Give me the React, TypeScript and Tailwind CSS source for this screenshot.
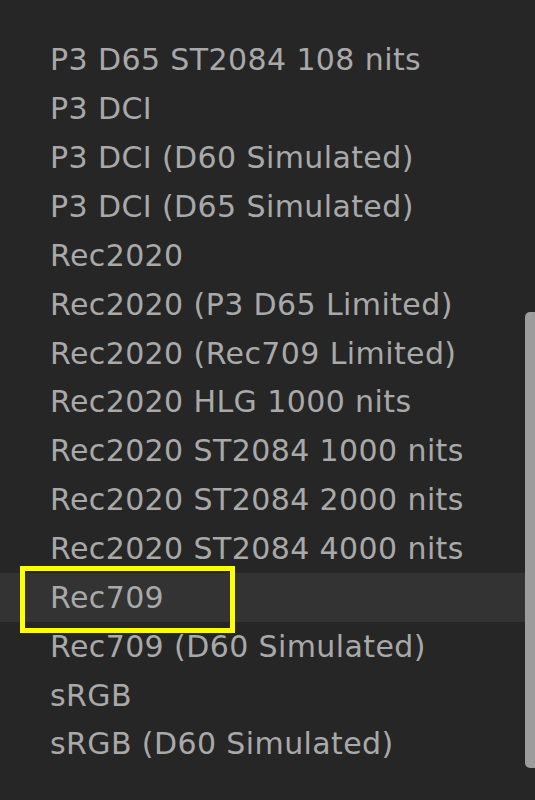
import React from 'react';

const items = [
  'P3 D65 ST2084 108 nits',
  'P3 DCI',
  'P3 DCI (D60 Simulated)',
  'P3 DCI (D65 Simulated)',
  'Rec2020',
  'Rec2020 (P3 D65 Limited)',
  'Rec2020 (Rec709 Limited)',
  'Rec2020 HLG 1000 nits',
  'Rec2020 ST2084 1000 nits',
  'Rec2020 ST2084 2000 nits',
  'Rec2020 ST2084 4000 nits',
  'Rec709',
  'Rec709 (D60 Simulated)',
  'sRGB',
  'sRGB (D60 Simulated)',
];

const App: React.FC = () => {
  return (
    <div
      className="relative h-[800px] w-[535px] overflow-hidden bg-[#262626]"
      style={{ fontFamily: '"DejaVu Sans", "Noto Sans", sans-serif' }}
    >
      <ul className="pt-[36px] pr-[10px]">
        {items.map((item) => (
          <li
            key={item}
            className={`flex h-[48.86px] items-center pl-[50px] text-[30px] leading-none tracking-[0.4px] text-[#a9a9a9] ${
              item === 'Rec709' ? 'bg-[#333333]' : ''
            }`}
          >
            {item}
          </li>
        ))}
      </ul>

      {/* scrollbar thumb */}
      <div className="absolute right-0 top-[312px] h-[456px] w-[10px] rounded-l-[5px] bg-[#9c9c9c]" />

      {/* annotation box */}
      <div className="absolute left-[20px] top-[566px] h-[67px] w-[215px] border-[5px] border-[#ffff00]" />
    </div>
  );
};

export default App;
